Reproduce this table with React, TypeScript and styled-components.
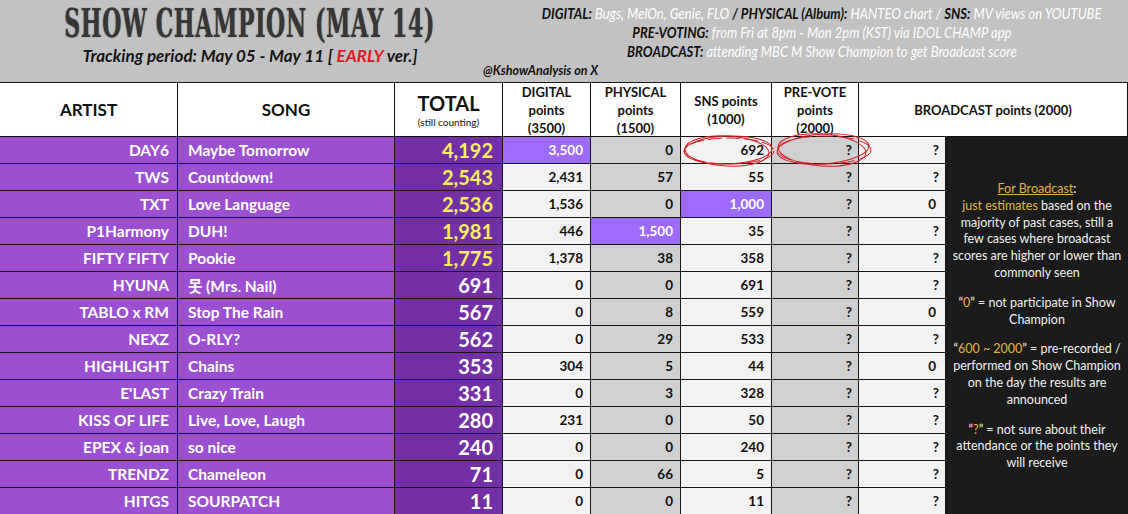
import React from "react";
import styled, { createGlobalStyle, css } from "styled-components";

const GlobalStyle = createGlobalStyle`
  html, body { margin: 0; padding: 0; background: #ffffff; }
  body { width: 1128px; height: 514px; overflow: hidden; }
  * { box-sizing: border-box; }
`;

const Page = styled.div`
  width: 1128px;
  height: 514px;
  overflow: hidden;
  background: #ffffff;
  font-family: Lato, "Open Sans", "Noto Sans", "Noto Sans CJK KR", sans-serif;
`;

const Header = styled.header`
  height: 83px;
  background: #c2c2c2;
  border-bottom: 1px solid #1a1a1a;
  display: grid;
  grid-template-columns: 480px 1fr;
`;

const HeaderLeft = styled.div`
  padding-left: 20px;
  display: flex;
  flex-direction: column;
  align-items: center;
`;

const Title = styled.h1`
  margin: 8px 0 0;
  height: 31px;
  font-family: "DejaVu Serif", "Liberation Serif", serif;
  font-weight: 900;
  font-stretch: condensed;
  font-size: 27px;
  line-height: 31px;
  color: #363636;
  white-space: nowrap;
  letter-spacing: 0.7px;
  transform: scale(0.906, 1.45);
  text-shadow: 0 0 1px #555;
`;

const Tracking = styled.div`
  margin-top: 7px;
  font-size: 17px;
  line-height: 20px;
  font-weight: 700;
  font-style: italic;
  color: #151515;
  white-space: nowrap;
`;

const Red = styled.span`
  color: #e0161c;
`;

const HeaderRight = styled.div`
  display: flex;
  flex-direction: column;
  align-items: center;
  padding-top: 4px;
  padding-left: 20px;
`;

const InfoLine = styled.div`
  height: 19px;
  font-size: 15px;
  font-style: italic;
  white-space: nowrap;
  color: #ffffff;
  transform: scaleX(0.87);
`;

const InfoKey = styled.span`
  color: #111111;
  font-weight: 700;
`;

const Handle = styled.div`
  align-self: flex-start;
  margin-left: -17px;
  margin-top: 2px;
  font-size: 12.5px;
  font-weight: 700;
  font-style: italic;
  color: #111111;
  white-space: nowrap;
`;

const TableWrap = styled.div`
  position: relative;
`;

const Table = styled.div`
  display: grid;
  grid-template-columns: 178px 217px 108px 88px 90px 91px 87px 87px 182px;
  grid-template-rows: 54px repeat(14, 27px);
`;

const HeadCell = styled.div<{ $span?: number }>`
  ${(p) => p.$span && css`grid-column: span ${p.$span};`}
  border-right: 1px solid #111;
  border-bottom: 1px solid #111;
  display: flex;
  flex-direction: column;
  align-items: center;
  justify-content: center;
  text-align: center;
  font-weight: 700;
  color: #111;
  overflow: hidden;
`;

const BigHead = styled.div`
  font-size: 17px;
`;

const TotalHead = styled.div`
  font-size: 20px;
  line-height: 22px;
`;

const SmallNote = styled.div`
  font-size: 10px;
  font-weight: 400;
  margin-top: 2px;
`;

const SmallHead = styled.div`
  font-size: 13px;
  line-height: 18px;
`;

type Tone = "purple" | "dark" | "light" | "gray" | "hl";

const toneBg: Record<Tone, string> = {
  purple: "#9a50d0",
  dark: "#7330a6",
  light: "#f2f2f2",
  gray: "#d0d0d0",
  hl: "#9d6cfd",
};

const Cell = styled.div<{ $tone: Tone; $align?: "left" | "right"; $pad?: number; $big?: boolean; $yellow?: boolean }>`
  background: ${(p) => toneBg[p.$tone]};
  border-right: 1px solid #161616;
  border-bottom: 1px solid #161616;
  display: flex;
  align-items: center;
  justify-content: ${(p) => (p.$align === "left" ? "flex-start" : "flex-end")};
  padding: ${(p) => (p.$align === "left" ? `0 0 0 ${p.$pad ?? 10}px` : `0 ${p.$pad ?? 7}px 0 0`)};
  font-weight: 700;
  font-size: ${(p) => (p.$big ? "20px" : p.$tone === "purple" ? "15.5px" : "13.5px")};
  color: ${(p) =>
    p.$yellow ? "#fbef5a" : p.$tone === "light" || p.$tone === "gray" ? "#111" : "#ffffff"};
  white-space: nowrap;
  overflow: hidden;
`;

const Panel = styled.div`
  grid-column: 9;
  grid-row: 2 / span 14;
  background: #1b1b1b;
  color: #f0f0f0;
  font-size: 12.5px;
  line-height: 16.8px;
  text-align: center;
  white-space: nowrap;
  padding-top: 44px;
  display: flex;
  flex-direction: column;
  gap: 13px;
`;

const Para = styled.p`
  margin: 0;
`;

const Gold = styled.span<{ $u?: boolean }>`
  color: #e2b340;
  ${(p) => p.$u && css`text-decoration: underline;`}
`;

const Marks = styled.svg`
  position: absolute;
  left: 0;
  top: 0;
  pointer-events: none;
`;

type Row = {
  artist: string;
  song: string;
  total: string;
  top?: boolean;
  dig: string;
  phy: string;
  sns: string;
  pre: string;
  bc: string;
  hl?: "dig" | "phy" | "sns";
};

const rows: Row[] = [
  { artist: "DAY6", song: "Maybe Tomorrow", total: "4,192", top: true, dig: "3,500", phy: "0", sns: "692", pre: "?", bc: "?", hl: "dig" },
  { artist: "TWS", song: "Countdown!", total: "2,543", top: true, dig: "2,431", phy: "57", sns: "55", pre: "?", bc: "?" },
  { artist: "TXT", song: "Love Language", total: "2,536", top: true, dig: "1,536", phy: "0", sns: "1,000", pre: "?", bc: "0", hl: "sns" },
  { artist: "P1Harmony", song: "DUH!", total: "1,981", top: true, dig: "446", phy: "1,500", sns: "35", pre: "?", bc: "?", hl: "phy" },
  { artist: "FIFTY FIFTY", song: "Pookie", total: "1,775", top: true, dig: "1,378", phy: "38", sns: "358", pre: "?", bc: "?" },
  { artist: "HYUNA", song: "못 (Mrs. Nail)", total: "691", dig: "0", phy: "0", sns: "691", pre: "?", bc: "?" },
  { artist: "TABLO x RM", song: "Stop The Rain", total: "567", dig: "0", phy: "8", sns: "559", pre: "?", bc: "0" },
  { artist: "NEXZ", song: "O-RLY?", total: "562", dig: "0", phy: "29", sns: "533", pre: "?", bc: "?" },
  { artist: "HIGHLIGHT", song: "Chains", total: "353", dig: "304", phy: "5", sns: "44", pre: "?", bc: "0" },
  { artist: "E'LAST", song: "Crazy Train", total: "331", dig: "0", phy: "3", sns: "328", pre: "?", bc: "?" },
  { artist: "KISS OF LIFE", song: "Live, Love, Laugh", total: "280", dig: "231", phy: "0", sns: "50", pre: "?", bc: "?" },
  { artist: "EPEX & joan", song: "so nice", total: "240", dig: "0", phy: "0", sns: "240", pre: "?", bc: "?" },
  { artist: "TRENDZ", song: "Chameleon", total: "71", dig: "0", phy: "66", sns: "5", pre: "?", bc: "?" },
  { artist: "HITGS", song: "SOURPATCH", total: "11", dig: "0", phy: "0", sns: "11", pre: "?", bc: "?" },
];

export default function App() {
  return (
    <Page>
      <GlobalStyle />
      <Header>
        <HeaderLeft>
          <Title>SHOW CHAMPION (MAY 14)</Title>
          <Tracking>
            Tracking period: May 05 - May 11 [ <Red>EARLY</Red> ver.]
          </Tracking>
        </HeaderLeft>
        <HeaderRight>
          <InfoLine>
            <InfoKey>DIGITAL:</InfoKey> Bugs, MelOn, Genie, FLO <InfoKey>/ PHYSICAL (Album):</InfoKey> HANTEO chart /{" "}
            <InfoKey>SNS:</InfoKey> MV views on YOUTUBE
          </InfoLine>
          <InfoLine>
            <InfoKey>PRE-VOTING:</InfoKey> from Fri at 8pm - Mon 2pm (KST) via IDOL CHAMP app
          </InfoLine>
          <InfoLine>
            <InfoKey>BROADCAST:</InfoKey> attending MBC M Show Champion to get Broadcast score
          </InfoLine>
          <Handle>@KshowAnalysis on X</Handle>
        </HeaderRight>
      </Header>
      <TableWrap>
        <Table>
          <HeadCell><BigHead>ARTIST</BigHead></HeadCell>
          <HeadCell><BigHead>SONG</BigHead></HeadCell>
          <HeadCell>
            <TotalHead>TOTAL</TotalHead>
            <SmallNote>(still counting)</SmallNote>
          </HeadCell>
          <HeadCell><SmallHead>DIGITAL<br />points<br />(3500)</SmallHead></HeadCell>
          <HeadCell><SmallHead>PHYSICAL<br />points<br />(1500)</SmallHead></HeadCell>
          <HeadCell><SmallHead>SNS points<br />(1000)</SmallHead></HeadCell>
          <HeadCell><SmallHead>PRE-VOTE<br />points<br />(2000)</SmallHead></HeadCell>
          <HeadCell $span={2}><SmallHead>BROADCAST points (2000)</SmallHead></HeadCell>
          {rows.map((r) => (
            <React.Fragment key={r.artist}>
              <Cell $tone="purple" $pad={8}>{r.artist}</Cell>
              <Cell $tone="purple" $align="left">{r.song}</Cell>
              <Cell $tone="dark" $big $pad={9} $yellow={r.top}>{r.total}</Cell>
              <Cell $tone={r.hl === "dig" ? "hl" : "light"}>{r.dig}</Cell>
              <Cell $tone={r.hl === "phy" ? "hl" : "gray"}>{r.phy}</Cell>
              <Cell $tone={r.hl === "sns" ? "hl" : "light"}>{r.sns}</Cell>
              <Cell $tone="gray" $pad={6}>{r.pre}</Cell>
              <Cell $tone="light" $pad={r.bc === "0" ? 9 : 6}>{r.bc}</Cell>
            </React.Fragment>
          ))}
          <Panel>
            <Para>
              <Gold $u>For Broadcast</Gold>:<br />
              <Gold>just estimates</Gold> based on the<br />
              majority of past cases, still a<br />
              few cases where broadcast<br />
              scores are higher or lower than<br />
              commonly seen
            </Para>
            <Para>
              “<Gold>0</Gold>” = not participate in Show<br />
              Champion
            </Para>
            <Para>
              “<Gold>600 ~ 2000</Gold>” = pre-recorded /<br />
              performed on Show Champion<br />
              on the day the results are<br />
              announced
            </Para>
            <Para>
              “<Gold>?</Gold>” = not sure about their<br />
              attendance or the points they<br />
              will receive
            </Para>
          </Panel>
        </Table>
        <Marks width="1128" height="431" viewBox="0 0 1128 431">
          <g fill="none" stroke="#d01e22" strokeWidth="1">
            <ellipse cx="728" cy="67" rx="44" ry="14" transform="rotate(-2 728 67)" />
            <ellipse cx="727" cy="68" rx="42" ry="15" transform="rotate(3 727 68)" />
            <ellipse cx="729" cy="68" rx="45" ry="13" strokeDasharray="14 4" />
            <ellipse cx="823" cy="66" rx="46" ry="15" transform="rotate(-4 823 66)" />
            <ellipse cx="822" cy="67" rx="44" ry="16" transform="rotate(4 822 67)" />
            <ellipse cx="824" cy="67" rx="47" ry="14" strokeDasharray="16 5" />
          </g>
        </Marks>
      </TableWrap>
    </Page>
  );
}
